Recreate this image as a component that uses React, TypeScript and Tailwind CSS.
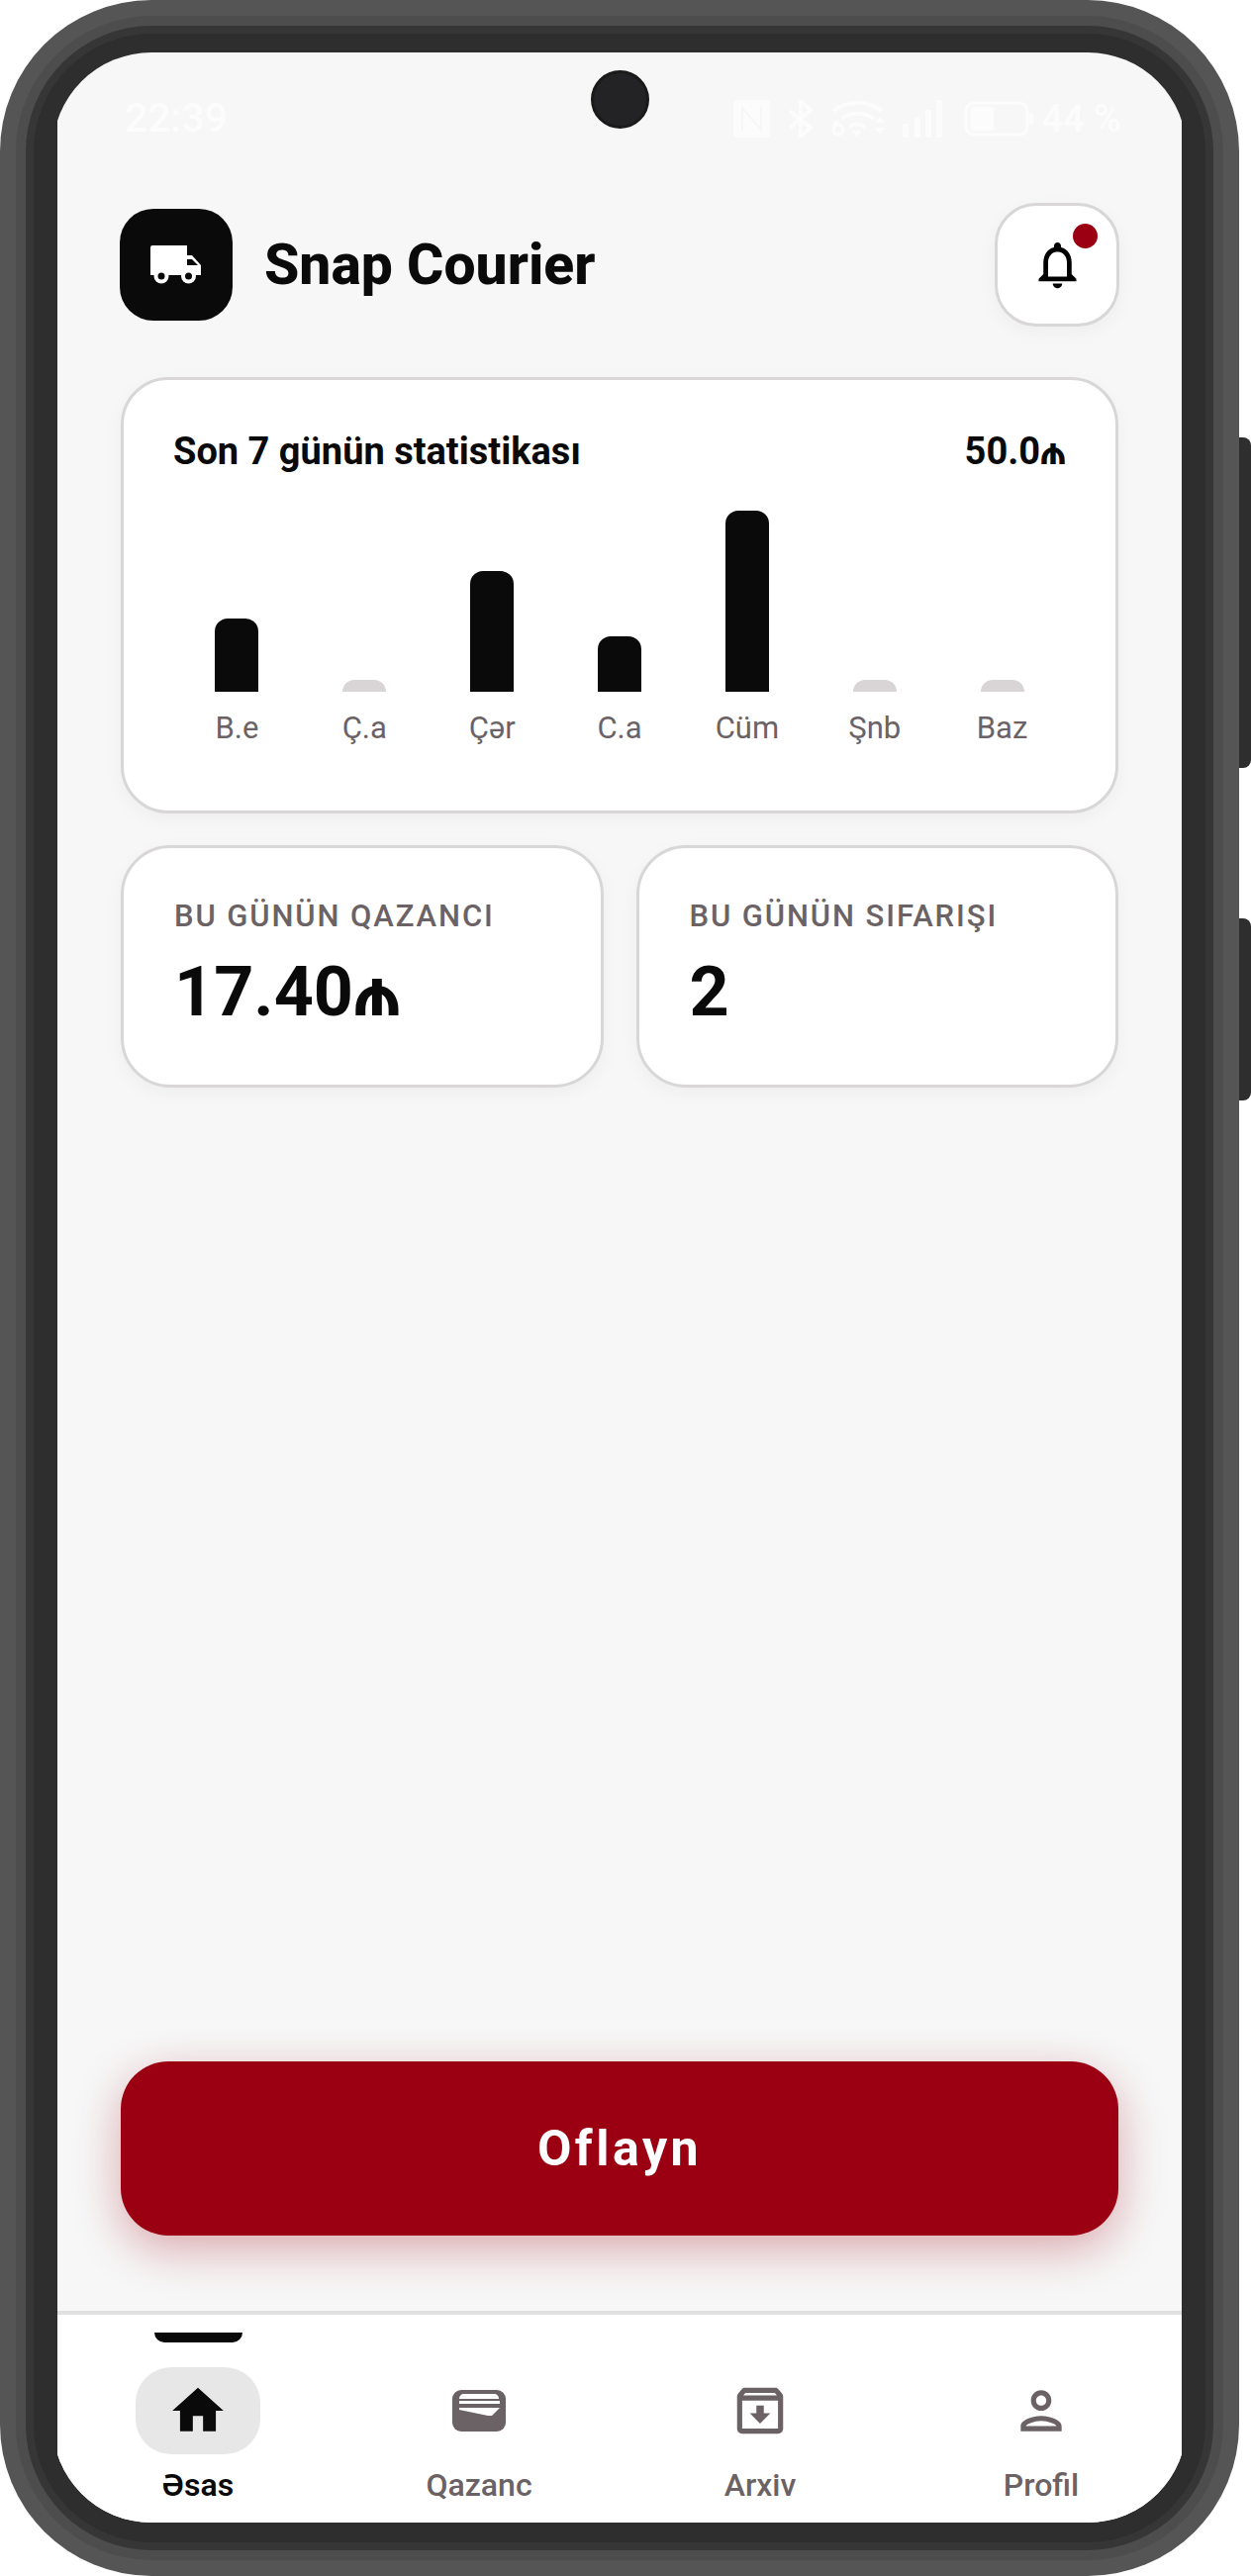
import React from "react";
import { MdHome, MdOutlineArchive, MdOutlineNotifications, MdOutlinePerson } from "react-icons/md";

const days = [
  { label: "B.e", h: 74, on: true },
  { label: "Ç.a", h: 12, on: false },
  { label: "Çər", h: 122, on: true },
  { label: "C.a", h: 56, on: true },
  { label: "Cüm", h: 183, on: true },
  { label: "Şnb", h: 12, on: false },
  { label: "Baz", h: 12, on: false },
];

const Truck = () => (
  <svg width="52" height="39" viewBox="0 0 52 39" fill="white">
    <path d="M2 0h35v10h5l9 10v10h-51v-28a2 2 0 0 1 2-2z" />
    <path d="M37 14h5l6 6h-11z" fill="#0a0a0a" />
    <circle cx="11" cy="31" r="7.5" />
    <circle cx="11" cy="31" r="3.5" fill="#0a0a0a" />
    <circle cx="38.5" cy="31" r="7.5" />
    <circle cx="38.5" cy="31" r="3.5" fill="#0a0a0a" />
  </svg>
);

const Wallet = () => (
  <svg width="54" height="42" viewBox="0 0 54 42">
    <rect width="54" height="42" rx="9" fill="#6b6265" />
    <path d="M7 9c0-3 2-5 5-5h30c3 0 5 2 5 5z" fill="white" />
    <rect x="7" y="11" width="41" height="3" fill="white" />
    <path d="M7 18h41l-8 8h-4l-29-6z" fill="white" />
  </svg>
);

const StatCard = ({ label, children }: { label: string; children: React.ReactNode }) => (
  <div className="flex-1 h-[245px] bg-white border-[3px] border-[#d9d6d7] rounded-[50px] pl-[51px] pt-[49px] shadow-[0_6px_20px_rgba(0,0,0,0.04)]">
    <p className="text-[31px] leading-[40px] font-medium tracking-[1.9px] text-[#6b6265]">{label}</p>
    <p className="mt-[14px] text-[70px] leading-[84px] font-bold text-[#0a0a0a]">{children}</p>
  </div>
);

const NavItem = ({ label, active, children }: { label: string; active?: boolean; children: React.ReactNode }) => (
  <div className="flex-1 flex flex-col items-center relative">
    {active && <div className="absolute top-[18px] w-[89px] h-[10px] bg-[#0a0a0a] rounded-b-[10px]" />}
    <div className={`mt-[53px] w-[126px] h-[88px] rounded-[36px] flex items-center justify-center ${active ? "bg-[#e8e7e8] text-[#0a0a0a]" : "text-[#6b6265]"}`}>
      {children}
    </div>
    <p className={`mt-[11px] text-[32px] leading-[40px] ${active ? "font-semibold text-[#0a0a0a]" : "font-medium text-[#6b6265]"}`}>{label}</p>
  </div>
);

export default function App() {
  return (
    <div className="relative w-[1264px] h-[2603px] bg-white font-['Roboto','Noto_Sans','DejaVu_Sans',sans-serif] overflow-hidden">
      {/* side buttons */}
      <div className="absolute left-[1240px] top-[442px] w-[24px] h-[334px] bg-[#2e2e2e] rounded-r-[8px]" />
      <div className="absolute left-[1240px] top-[928px] w-[24px] h-[184px] bg-[#2e2e2e] rounded-r-[8px]" />

      {/* phone shell */}
      <div className="relative w-[1252px] h-[2603px] bg-[#555555] rounded-[153px] p-[16px]">
        <div className="w-full h-full bg-[#4d4d4d] rounded-[137px] p-[10px]">
          <div className="w-full h-full bg-[#363636] rounded-[127px] p-[8px]">
            <div className="w-full h-full bg-[#2e2e2e] rounded-[119px] pt-[19px] pb-[20px] px-[19px]">
              <div className="w-full h-full bg-[#2e2e2e] rounded-[100px] overflow-hidden px-[5px]">
                <div className="relative w-full h-full bg-[#f7f7f7] flex flex-col">
                  {/* status bar, almost invisible on the light background */}
                  <div className="h-[98px] pt-[42px] pl-[68px] flex items-start text-[#fcfcfc]">
                    <span className="text-[41px] leading-[48px] font-medium">22:39</span>
                    <div className="ml-auto mr-[61px] mt-[6px] flex items-center h-[38px]">
                      <svg width="37" height="38" viewBox="0 0 37 38">
                        <rect width="37" height="38" rx="4" fill="currentColor" />
                        <path d="M9 31V8l19 22V7" fill="none" stroke="#f7f7f7" strokeWidth="2" />
                      </svg>
                      <svg className="ml-[19px]" width="24" height="38" viewBox="0 0 24 38" fill="none" stroke="currentColor" strokeWidth="4">
                        <path d="M1 11l21 17-10 8V2l10 8-21 18" />
                      </svg>
                      <svg className="ml-[18px]" width="55" height="38" viewBox="0 0 55 38" fill="none" stroke="currentColor" strokeWidth="4">
                        <path d="M3 11c14-11 35-11 49 0M11 19c10-7 23-7 33 0M19 27c5-3 11-3 16 0" />
                        <path d="M22 31h10l-5 6z" fill="currentColor" stroke="none" />
                        <path d="M45 23l5-6 5 6zM45 28h10l-5 7z" fill="currentColor" stroke="none" />
                        <path d="M9 21c-3 1-6 3-6 9a5 5 0 0 0 10 0a5 5 0 0 0-10 0" strokeWidth="3" />
                      </svg>
                      <svg className="ml-[18px]" width="40" height="38" viewBox="0 0 40 38" fill="currentColor">
                        <rect x="0" y="24" width="6" height="14" rx="1" />
                        <rect x="12" y="18" width="6" height="20" rx="1" />
                        <rect x="23" y="10" width="6" height="28" rx="1" />
                        <rect x="34" y="0" width="6" height="38" rx="1" />
                      </svg>
                      <svg className="ml-[22px]" width="70" height="36" viewBox="0 0 70 36" fill="none" stroke="currentColor" strokeWidth="3">
                        <rect x="2" y="2" width="62" height="32" rx="8" />
                        <rect x="6" y="6" width="24" height="24" rx="3" fill="currentColor" stroke="none" />
                        <rect x="66" y="12" width="4" height="12" rx="1" fill="currentColor" stroke="none" />
                      </svg>
                      <span className="ml-[8px] text-[38px] leading-[40px] font-medium">44 %</span>
                    </div>
                  </div>

                  {/* camera */}
                  <div className="absolute left-[539px] top-[18px] w-[59px] h-[59px] rounded-full bg-[#232325] border-[3px] border-[#1a1a1a]" />

                  {/* header */}
                  <div className="pl-[63px] pr-[63px] mt-[54px] flex items-center justify-between">
                    <div className="flex items-center gap-[32px]">
                      <div className="w-[114px] h-[113px] rounded-[34px] bg-[#0a0a0a] flex items-center justify-center">
                        <Truck />
                      </div>
                      <h1 className="text-[57px] leading-[68px] font-extrabold text-[#0a0a0a]">Snap Courier</h1>
                    </div>
                    <div className="relative w-[126px] h-[125px] rounded-[42px] bg-white border-[3px] border-[#d9d6d7] flex items-center justify-center shadow-[0_6px_20px_rgba(0,0,0,0.04)]">
                      <MdOutlineNotifications size={57} className="text-black" />
                      <div className="absolute top-[18px] right-[19px] w-[25px] h-[25px] rounded-full bg-[#9b0012]" />
                    </div>
                  </div>

                  {/* weekly stats */}
                  <div className="mx-[64px] mt-[51px] h-[441px] bg-white border-[3px] border-[#d9d6d7] rounded-[48px] px-[50px] pt-[49px] shadow-[0_6px_20px_rgba(0,0,0,0.04)]">
                    <div className="flex justify-between items-center">
                      <p className="text-[38px] leading-[46px] font-bold text-[#0a0a0a]">Son 7 günün statistikası</p>
                      <p className="text-[38px] leading-[46px] font-bold text-[#0a0a0a]">50.0₼</p>
                    </div>
                    <div className="mt-[37px] flex">
                      {days.map((d) => (
                        <div key={d.label} className="flex-1 flex flex-col items-center">
                          <div className="h-[183px] flex items-end">
                            <div
                              className={`w-[44px] rounded-t-[13px] ${d.on ? "bg-[#0a0a0a]" : "bg-[#d9d5d6]"}`}
                              style={{ height: d.h }}
                            />
                          </div>
                          <p className="mt-[19px] text-[31px] leading-[36px] text-[#6b6265]">{d.label}</p>
                        </div>
                      ))}
                    </div>
                  </div>

                  {/* today cards */}
                  <div className="mx-[64px] mt-[32px] flex gap-[33px]">
                    <StatCard label="BU GÜNÜN QAZANCI">17.40₼</StatCard>
                    <StatCard label="BU GÜNÜN SIFARIŞI">2</StatCard>
                  </div>

                  <div className="flex-1" />

                  <div className="mx-[64px] h-[176px] rounded-[48px] bg-[#9b0012] flex items-center justify-center shadow-[0_14px_48px_rgba(155,0,18,0.32)]">
                    <span className="text-[50px] font-bold tracking-[3.5px] text-white">Oflayn</span>
                  </div>

                  <div className="mt-[76px] h-[214px] bg-white border-t-[4px] border-[#e0e0e0] flex">
                    <NavItem label="Əsas" active>
                      <MdHome size={62} />
                    </NavItem>
                    <NavItem label="Qazanc">
                      <Wallet />
                    </NavItem>
                    <NavItem label="Arxiv">
                      <MdOutlineArchive size={62} />
                    </NavItem>
                    <NavItem label="Profil">
                      <MdOutlinePerson size={62} />
                    </NavItem>
                  </div>
                </div>
              </div>
            </div>
          </div>
        </div>
      </div>
    </div>
  );
}
